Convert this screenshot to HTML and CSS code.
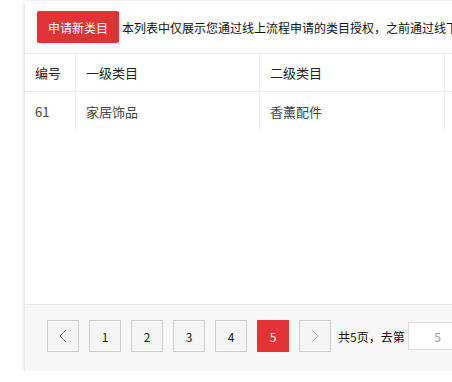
FILE: index.html
```html
<!DOCTYPE html>
<html lang="zh-CN">
<head>
    <meta charset="UTF-8">
    <meta name="viewport" content="width=device-width, initial-scale=1.0">
    <title>类目授权</title>
    <link rel="stylesheet" href="styles.css">
</head>
<body>
    <div class="panel">
        <div class="toolbar">
            <button class="btn-apply">申请新类目</button>
            <span class="tip">本列表中仅展示您通过线上流程申请的类目授权，之前通过线下</span>
        </div>

        <table class="cat-table">
            <thead>
                <tr>
                    <th class="col-id">编号</th>
                    <th class="col-first">一级类目</th>
                    <th class="col-second">二级类目</th>
                    <th class="col-status"></th>
                </tr>
            </thead>
            <tbody>
                <tr>
                    <td>61</td>
                    <td>家居饰品</td>
                    <td>香薰配件</td>
                    <td></td>
                </tr>
            </tbody>
        </table>

        <div class="table-space"></div>

        <div class="footer">
            <div class="pager">
                <a class="page prev">
                    <svg width="8" height="14" viewBox="0 0 8 14"><path d="M7 1 L1 7 L7 13" fill="none" stroke="currentColor" stroke-width="1"/></svg>
                </a>
                <a class="page">1</a>
                <a class="page">2</a>
                <a class="page">3</a>
                <a class="page">4</a>
                <a class="page current">5</a>
                <a class="page next disabled">
                    <svg width="8" height="14" viewBox="0 0 8 14"><path d="M1 1 L7 7 L1 13" fill="none" stroke="currentColor" stroke-width="1"/></svg>
                </a>
                <span class="total">共5页，去第</span>
                <input class="jump" type="text" value="5">
            </div>
        </div>
    </div>
</body>
</html>
```

FILE: styles.css
```css
html, body {
    margin: 0;
    overflow: hidden;
    background-color: #fff;
}

body {
    font-family: "Noto Sans CJK SC", "Microsoft YaHei", sans-serif;
    font-size: 12px;
    color: #333;
}

.panel {
    margin: 1px 0 0 25px;
    width: 700px;
    background: #fff;
    box-shadow: 0 1px 4px rgba(0, 0, 0, 0.22);
}

.toolbar {
    display: flex;
    align-items: center;
    padding: 10px 12px 10px 12px;
    white-space: nowrap;
}

.btn-apply {
    height: 32px;
    padding: 0 11px;
    border: none;
    border-radius: 2px;
    background-color: #e03434;
    color: #fff;
    font-family: inherit;
    font-size: 12px;
    cursor: pointer;
}

.tip {
    margin-left: 3px;
    color: #111;
    font-size: 12px;
}

.cat-table {
    border-collapse: collapse;
    table-layout: fixed;
    width: 600px;
    font-size: 13px;
}

.cat-table th,
.cat-table td {
    text-align: left;
    padding: 0 10px;
    border-top: 1px solid #ececec;
    border-right: 1px solid #ececec;
    white-space: nowrap;
}

.cat-table th {
    height: 37px;
    font-weight: normal;
    color: #222;
}

.cat-table td {
    height: 39px;
    color: #444;
}

.col-id { width: 30px; }
.col-first { width: 163px; }
.col-second { width: 164px; }

.table-space {
    height: 173px;
}

.footer {
    border-top: 1px solid #e8e8e8;
    background: #f7f7f7;
    padding: 15px 0 19px 22px;
}

.pager {
    display: flex;
    align-items: center;
    gap: 10px;
    white-space: nowrap;
}

.page {
    width: 30px;
    height: 30px;
    display: flex;
    align-items: center;
    justify-content: center;
    border: 1px solid #ccc;
    background: #f5f5f5;
    color: #222;
    font-size: 12px;
}

.page.current {
    border-color: #e03434;
    background: #e03434;
    color: #fff;
}

.page.prev {
    color: #777;
}

.page.disabled {
    color: #bbb;
}

.total {
    margin-left: -3px;
    color: #111;
    font-size: 12px;
}

.jump {
    box-sizing: border-box;
    width: 60px;
    height: 28px;
    margin-left: -7px;
    border: 1px solid #ddd;
    background: #fff;
    color: #999;
    text-align: center;
    font-family: inherit;
    font-size: 12px;
}
```
